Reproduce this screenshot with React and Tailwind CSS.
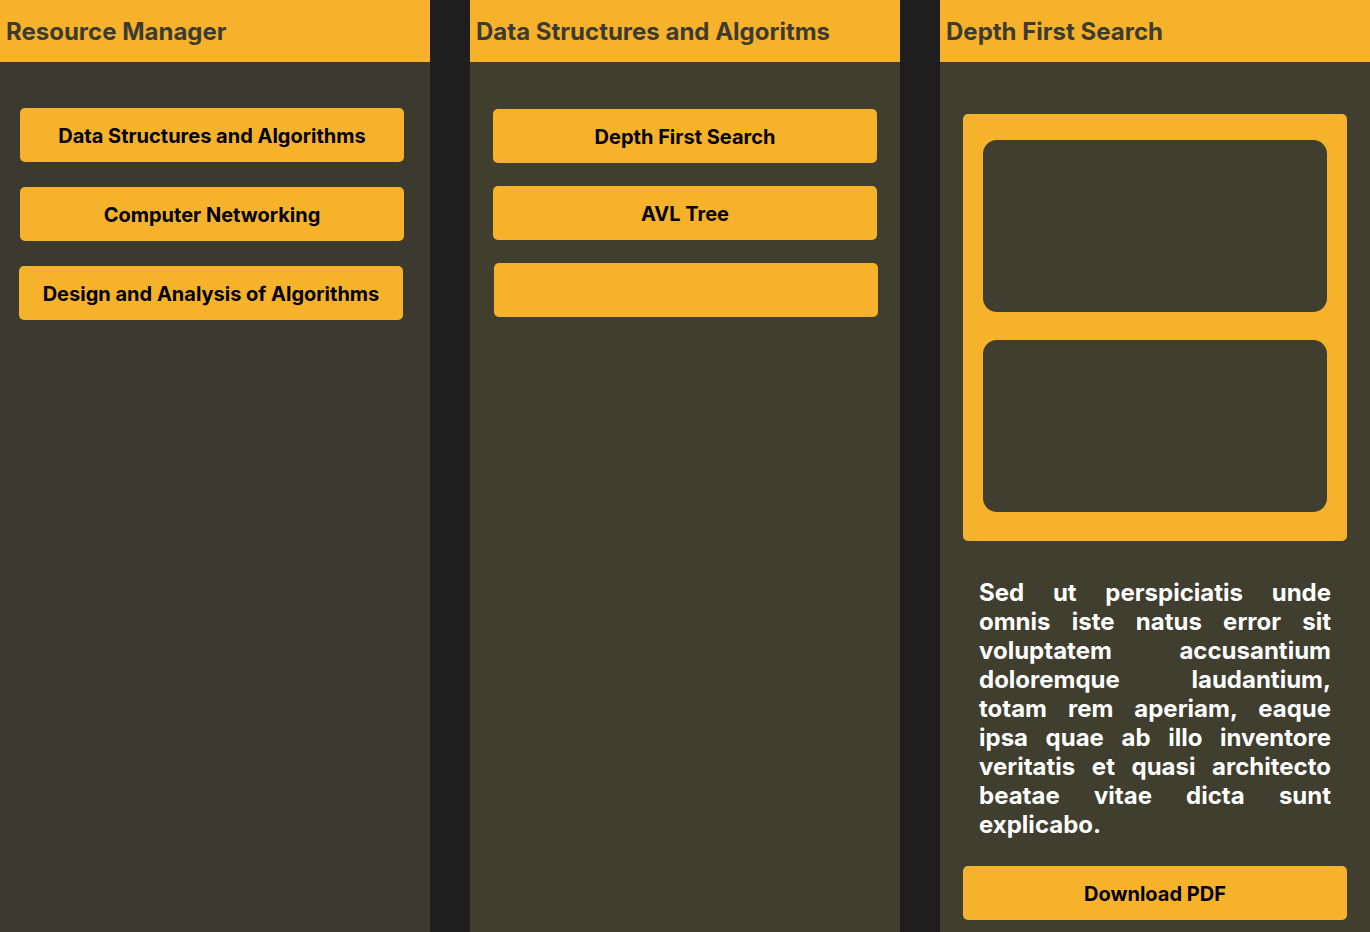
export default function App() {
  const font = { fontFamily: 'Inter, "Noto Sans", sans-serif' };
  const Btn = ({ children, className = "" }) => (
    <div className={`h-[54px] rounded-[5px] bg-[#f6b22b] flex items-center justify-center pt-px text-[20px] font-bold text-black ${className}`}>
      {children}
    </div>
  );
  const Header = ({ children }) => (
    <div className="h-[62px] bg-[#f6b22b] flex items-center pl-[6px] pt-[1px] text-[24px] font-bold text-[#3d3b2e]">
      {children}
    </div>
  );
  return (
    <div style={font} className="w-[1370px] h-[932px] bg-[#1e1e1e] flex gap-[40px] overflow-hidden">
      <div className="w-[430px] h-full bg-[#3c3a2e] flex flex-col">
        <Header>Resource Manager</Header>
        <div className="flex flex-col gap-[25px] pt-[46px] pr-[26px] pl-[20px]">
          <Btn>Data Structures and Algorithms</Btn>
          <Btn>Computer Networking</Btn>
          <Btn className="-ml-px mr-px">Design and Analysis of Algorithms</Btn>
        </div>
      </div>
      <div className="w-[430px] h-full bg-[#403e2f] flex flex-col">
        <Header>Data Structures and Algoritms</Header>
        <div className="flex flex-col gap-[23px] pt-[47px] pl-[23px] pr-[23px]">
          <Btn>Depth First Search</Btn>
          <Btn>AVL Tree</Btn>
          <Btn className="ml-px -mr-px"></Btn>
        </div>
      </div>
      <div className="w-[430px] h-full bg-[#403e2f] flex flex-col">
        <Header>Depth First Search</Header>
        <div className="px-[23px] pt-[52px]">
          <div className="h-[427px] rounded-[5px] bg-[#f6b22b] flex flex-col gap-[28px] px-[20px] pt-[26px]">
            <div className="h-[172px] rounded-[14px] bg-[#403e2f]" />
            <div className="h-[172px] rounded-[14px] bg-[#403e2f]" />
          </div>
          <p className="mt-[37px] mx-[16px] text-[24px] leading-[29px] font-bold text-white text-justify">
            Sed ut perspiciatis unde omnis iste natus error sit voluptatem accusantium doloremque laudantium, totam rem aperiam, eaque ipsa quae ab illo inventore veritatis et quasi architecto beatae vitae dicta sunt explicabo.
          </p>
          <Btn className="mt-[27px]">Download PDF</Btn>
        </div>
      </div>
    </div>
  );
}
